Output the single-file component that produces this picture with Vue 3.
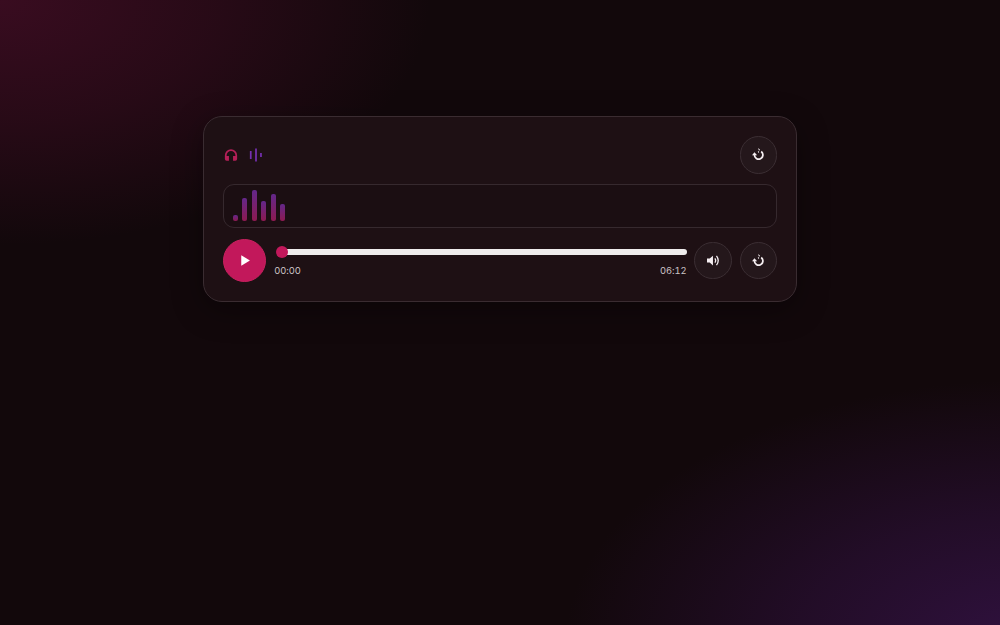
<script setup>
import { ref } from "vue";

const bars = ref([6, 23.3, 31, 20.3, 27.3, 17.2]);
const position = ref(0);
const duration = ref(372);
const playing = ref(false);

function formatTime(s) {
  const min = String(Math.floor(s / 60)).padStart(2, "0");
  const sec = String(Math.floor(s % 60)).padStart(2, "0");
  return `${min}:${sec}`;
}

function restart() {
  position.value = 0;
}
</script>

<template>
  <main class="page">
    <section class="player">
      <header class="top">
        <div class="marks">
          <svg class="mark pink" viewBox="0 0 24 24">
            <path
              d="M12 2A10.500 10.500 0 0 0 1.500 12.500V19a3 3 0 0 0 3 3H8.500v-8.500H4.500v-1a7.500 7.500 0 0 1 15 0v1h-4V22h4a3 3 0 0 0 3-3v-6.500A10.500 10.500 0 0 0 12 2z"
            />
          </svg>
          <svg class="mark purple" viewBox="0 0 24 24">
            <path d="M1.500 5h3v14h-3zM10.500 1h3v22h-3zM19 8.500h3v7h-3z" />
          </svg>
        </div>
        <button class="round" aria-label="Reset" @click="restart">
          <svg viewBox="0 0 24 24">
            <path class="line" d="M4.500 12.500a7.800 7.800 0 1 0 12.500-6" />
            <path d="M0 13.500L4.500 8l5 5.500zM11 0l4 3-2 2zM10.500 7l2.500-1.500v4z" />
          </svg>
        </button>
      </header>

      <div class="visual">
        <span
          v-for="(h, i) in bars"
          :key="i"
          class="bar"
          :style="{ height: h + 'px' }"
        ></span>
      </div>

      <div class="controls">
        <button class="play" aria-label="Play" @click="playing = !playing">
          <svg viewBox="0 0 24 24"><path d="M6 2.500l16 9.500-16 9.500z" /></svg>
        </button>
        <div class="timeline">
          <input
            v-model="position"
            class="seek"
            type="range"
            min="0"
            :max="duration"
          />
          <div class="times">
            <span>{{ formatTime(position) }}</span>
            <span>{{ formatTime(duration) }}</span>
          </div>
        </div>
        <button class="round" aria-label="Volume">
          <svg viewBox="0 0 24 24">
            <path d="M0 8.500h5l6-5.500v18l-6-5.500H0z" />
            <path class="wave" d="M14.500 8q3 4 0 8M17.500 3.500q6.500 8.500 0 17" />
          </svg>
        </button>
        <button class="round" aria-label="Replay" @click="restart">
          <svg viewBox="0 0 24 24">
            <path class="line" d="M4.500 12.500a7.800 7.800 0 1 0 12.500-6" />
            <path d="M0 13.500L4.500 8l5 5.500zM11 0l4 3-2 2zM10.500 7l2.500-1.500v4z" />
          </svg>
        </button>
      </div>
    </section>
  </main>
</template>

<style>
body {
  margin: 0;
  background: #12080b;
}
</style>

<style scoped>
.page {
  box-sizing: border-box;
  height: 625px;
  padding-top: 116.4px;
  overflow: hidden;
  font-family: Inter, "Liberation Sans", sans-serif;
  background:
    radial-gradient(430px 245px at 0 0, #390c20, rgba(57, 12, 32, 0.55) 50%, transparent),
    radial-gradient(465px 265px at 1030px 645px, #30113f, rgba(48, 17, 63, 0.54) 50%, transparent),
    #12080b;
}

.player {
  box-sizing: border-box;
  width: 593.75px;
  margin: 0 auto;
  padding: 18.75px;
  border: 1px solid #3a2c31;
  border-radius: 19px;
  background: #1e1014;
  box-shadow: 0 8px 31px rgba(0, 0, 0, 0.35);
  display: flex;
  flex-direction: column;
  gap: 10.7px;
}

.top {
  display: flex;
  justify-content: space-between;
  align-items: center;
}

.marks {
  display: flex;
  gap: 11px;
  padding-left: 1.5px;
}

.mark {
  width: 14px;
  height: 14px;
}

.pink {
  fill: #b51f58;
}

.purple {
  fill: #742fae;
}

button {
  box-sizing: border-box;
  flex: none;
  padding: 0;
  border-radius: 50%;
  display: grid;
  place-items: center;
  color: #f5eef1;
}

.round {
  width: 37.5px;
  height: 37.5px;
  border: 1px solid #3b2e33;
  background: #24171b;
}

.round svg {
  width: 13px;
  height: 13px;
  fill: currentColor;
}

.line,
.wave {
  fill: none;
  stroke: currentColor;
  stroke-width: 3.2;
}

.wave {
  stroke-width: 2.4;
}

.visual {
  box-sizing: border-box;
  height: 43.75px;
  padding: 6.25px 9.2px;
  border: 1px solid #36292e;
  border-radius: 11px;
  background: #1b0e12;
  display: flex;
  align-items: flex-end;
  gap: 4.4px;
}

.bar {
  width: 5px;
  border-radius: 2px;
  background: linear-gradient(#63278a, #8c1a50);
}

.controls {
  display: flex;
  align-items: center;
  gap: 7.8px;
}

.play {
  width: 43.5px;
  height: 43.5px;
  border: 1px solid #c9215f;
  background: #c2185b;
}

.play svg {
  width: 13px;
  height: 13px;
  fill: #fff;
}

.timeline {
  flex: 1;
  min-width: 0;
  padding-top: 2px;
}

.seek {
  appearance: none;
  display: block;
  width: calc(100% - 1.5px);
  height: 12px;
  margin: 0 0 6px 1.5px;
  background: transparent;
}

.seek::-webkit-slider-runnable-track {
  height: 6px;
  border-radius: 3px;
  background: linear-gradient(90deg, transparent 4px, #efecec 4px);
}

.seek::-webkit-slider-thumb {
  appearance: none;
  width: 12px;
  height: 12px;
  margin-top: -3px;
  border-radius: 50%;
  background: #c2185b;
}

.times {
  display: flex;
  justify-content: space-between;
  font-size: 9.375px;
  line-height: 13px;
  letter-spacing: -0.05px;
  font-variant-numeric: tabular-nums;
  color: #cbc3c6;
}
</style>
